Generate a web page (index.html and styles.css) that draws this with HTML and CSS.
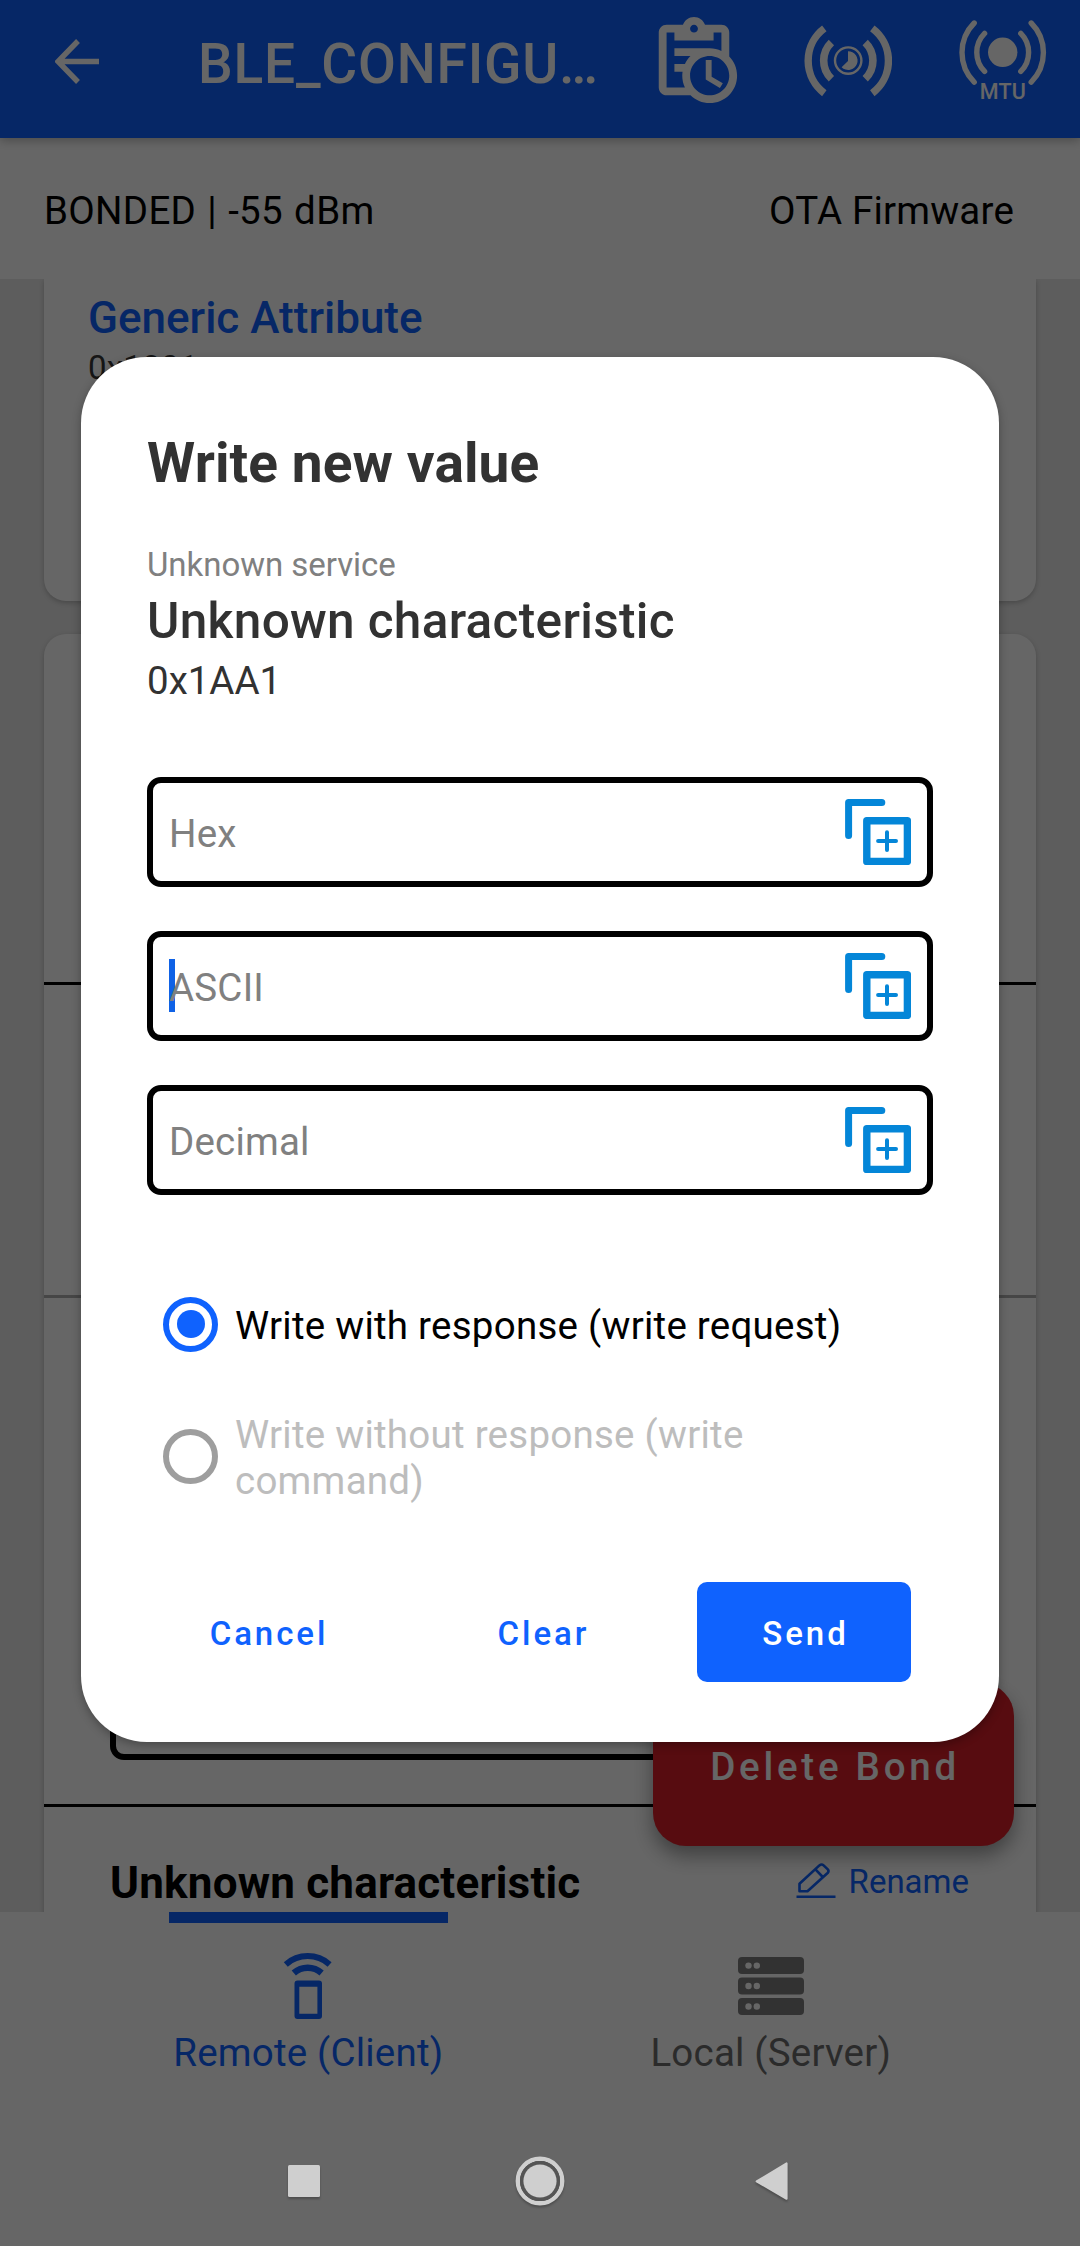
FILE: index.html
```html
<!DOCTYPE html>
<html lang="en">
<head>
<meta charset="utf-8">
<title>BLE_CONFIGURATOR</title>
<link rel="stylesheet" href="styles.css">
</head>
<body>
<svg class="defs" width="0" height="0">
  <symbol id="copy-add" viewBox="0 0 66 66">
    <g fill="none" stroke="#0486d8" stroke-linejoin="round" stroke-linecap="round">
      <path d="M3.6 36.5V3.6H36.8" stroke-width="7"/>
      <rect x="21.8" y="21.8" width="40.6" height="40.6" stroke-width="7.4"/>
      <path d="M42 33.2V51M33.1 42.1H51" stroke-width="4"/>
    </g>
  </symbol>
</svg>
<div class="screen">
  <header class="toolbar">
    <svg class="back" width="45" height="45" viewBox="0 0 45 45"><path d="M44 22.5H4M23 2L3 22.5L23 43" fill="none" stroke="#fff" stroke-width="5.4"/></svg>
    <h1 class="device">BLE_CONFIGU…</h1>
    <div class="actions">
      <svg width="94" height="94" viewBox="0 0 24 24"><path fill="#fff" d="M21 11.11V5C21 3.9 20.11 3 19 3H14.82C14.4 1.84 13.3 1 12 1S9.6 1.84 9.18 3H5C3.9 3 3 3.9 3 5V19C3 20.11 3.9 21 5 21H11.11C12.37 22.24 14.09 23 16 23C19.87 23 23 19.87 23 16C23 14.09 22.24 12.37 21 11.11M12 3C12.55 3 13 3.45 13 4S12.55 5 12 5 11 4.55 11 4 11.45 3 12 3M5 19V5H7V7H17V5H19V9.68C18.09 9.25 17.08 9 16 9H7V11H11.1C10.5 11.57 10.04 12.25 9.68 13H7V15H9.08C9.03 15.33 9 15.66 9 16C9 17.08 9.25 18.09 9.68 19H5M16 21C13.24 21 11 18.76 11 16S13.24 11 16 11 21 13.24 21 16 18.76 21 16 21M16.5 16.25L19.36 17.94L18.61 19.16L15 17V12H16.5V16.25Z"/></svg>
      <svg width="88" height="94" viewBox="804 13 88 94">
        <g fill="none" stroke="#fff">
          <path d="M824.3 28.4A40.6 40.6 0 0 0 824.3 93.2M872.3 28.4A40.6 40.6 0 0 1 872.3 93.2" stroke-width="7.4"/>
          <path d="M831.4 42.4A25.3 25.3 0 0 0 831.4 78.8M865.2 42.4A25.3 25.3 0 0 1 865.2 78.8" stroke-width="7.6"/>
          <circle cx="848.2" cy="60.6" r="13.2" stroke-width="2.4"/>
        </g>
        <path d="M848 51.2A9.4 9.4 0 1 1 841.6 67.3L848 61Z" fill="#fff"/>
      </svg>
      <svg width="90" height="94" viewBox="958 13 90 94">
        <g fill="none" stroke="#fff" stroke-linecap="round" stroke-width="5.4">
          <path d="M974.2 23A42 42 0 0 0 974.2 82.2M1031.2 23A42 42 0 0 1 1031.2 82.2"/>
          <path d="M984.6 33.4A27 27 0 0 0 984.6 71.4M1020.8 33.4A27 27 0 0 1 1020.8 71.4"/>
        </g>
        <circle cx="1002.7" cy="52.3" r="14.7" fill="#fff"/>
        <text x="1003" y="99.4" text-anchor="middle" class="mtu">MTU</text>
      </svg>
    </div>
  </header>

  <div class="status"><span class="bond">BONDED | -55 dBm</span><span>OTA Firmware</span></div>

  <main class="list">
    <section class="card generic">
      <h2 class="service">Generic Attribute</h2>
      <p class="uuid">0x1801</p>
    </section>
    <section class="card unknown">
      <div class="row first"></div>
      <div class="row second"></div>
      <div class="row third"><div class="value"></div></div>
      <div class="row characteristic">
        <h3>Unknown characteristic</h3>
        <a class="rename">
          <svg width="40" height="36" viewBox="0 0 40 36"><g fill="none" stroke="#0f62fe" stroke-width="2.6" stroke-linejoin="round"><path d="M3.5 28.3V20.8L23.4 2.4Q25.6 .6 27.6 2.4L31.8 6.4Q33.3 8.2 31.6 10L11.5 28.3ZM19.4 6.4L26.8 14"/><path d="M.5 33.8H39.5"/></g></svg>
          <span>Rename</span>
        </a>
      </div>
    </section>
    <button class="delete">Delete Bond</button>
  </main>

  <nav class="tabs">
    <div class="tab active">
      <svg width="66" height="66" viewBox="0 0 66 66">
        <g fill="none" stroke="#0f62fe" stroke-linejoin="round">
          <path d="M10.8 11.4A33 33 0 0 1 54.6 11.4" stroke-width="6"/>
          <path d="M18.8 20A21 21 0 0 1 46.6 20" stroke-width="6.4"/>
        </g>
        <path fill="#0f62fe" fill-rule="evenodd" d="M22.5 27.4H44Q47 27.4 47 30.4V63Q47 66 44 66H22.5Q19.5 66 19.5 63V30.4Q19.5 27.4 22.5 27.4ZM24.3 33.7V60.8H42.4V33.7Z"/>
      </svg>
      <span>Remote (Client)</span>
    </div>
    <div class="tab">
      <svg width="66" height="66" viewBox="0 0 66 66">
        <g fill="#7d7d7d"><rect y="4" width="66" height="17" rx="4"/><rect y="24.6" width="66" height="17" rx="4"/><rect y="45" width="66" height="17" rx="4"/></g>
        <g fill="#fff"><circle cx="10.5" cy="12.6" r="3.2"/><circle cx="18.8" cy="12.6" r="3.2"/><circle cx="10.5" cy="33" r="3.2"/><circle cx="18.8" cy="33" r="3.2"/><circle cx="10.5" cy="53.5" r="3.2"/><circle cx="18.8" cy="53.5" r="3.2"/></g>
      </svg>
      <span>Local (Server)</span>
    </div>
  </nav>

  <footer class="system">
    <svg width="34" height="34" viewBox="0 0 34 34"><rect x="1" y="1" width="32" height="32" rx="1.5" fill="#cfcfcf"/></svg>
    <svg class="home" width="50" height="50" viewBox="0 0 50 50"><circle cx="25" cy="25" r="22.2" fill="none" stroke="#cfcfcf" stroke-width="4.4"/><circle cx="25" cy="25" r="18.2" fill="none" stroke="#555" stroke-width="3.6"/><circle cx="25" cy="25" r="16.6" fill="#cfcfcf"/></svg>
    <svg width="34" height="40" viewBox="0 0 34 40"><path d="M31.6 2.4V37.8L1.6 20.4Z" fill="#cfcfcf" stroke="#cfcfcf" stroke-width="2" stroke-linejoin="round"/></svg>
  </footer>

  <div class="scrim">
    <div class="dialog">
      <h2 class="title">Write new value</h2>
      <p class="svc">Unknown service</p>
      <p class="char">Unknown characteristic</p>
      <p class="id">0x1AA1</p>
      <div class="fields">
        <div class="field"><span>Hex</span><svg width="66" height="66"><use href="#copy-add"/></svg></div>
        <div class="field focused"><span>ASCII</span><svg width="66" height="66"><use href="#copy-add"/></svg></div>
        <div class="field"><span>Decimal</span><svg width="66" height="66"><use href="#copy-add"/></svg></div>
      </div>
      <div class="option checked"><i class="radio"></i><span>Write with response (write request)</span></div>
      <div class="option disabled"><i class="radio"></i><span>Write without response (write command)</span></div>
      <div class="buttons">
        <button class="cancel">Cancel</button>
        <button class="clear">Clear</button>
        <button class="send">Send</button>
      </div>
    </div>
  </div>
</div>
</body>
</html>
```
FILE: styles.css
```css
* { box-sizing: border-box; margin: 0; padding: 0; }
body { font-family: Roboto, "Liberation Sans", sans-serif; background: #fff; font-size: 38.5px; line-height: 46px; letter-spacing: .2px; }
svg { display: block; flex: none; }
button { border: 0; background: none; font-family: inherit; font-weight: 500; }
.defs { position: absolute; }
.screen { position: relative; width: 1080px; height: 2246px; display: flex; flex-direction: column; overflow: hidden; background: #fff; }

.toolbar { height: 138px; flex: none; background: #0f62fe; display: flex; align-items: flex-start; padding-left: 55px; position: relative; z-index: 1; box-shadow: 0 3px 9px rgba(0,0,0,.25); }
.back { margin-top: 39px; }
.device { margin: 32px 0 0 98px; width: 449px; font-size: 55px; line-height: 64px; font-weight: 500; letter-spacing: .8px; color: #fff; white-space: nowrap; }
.actions { display: flex; padding-top: 13px; }
.actions svg + svg { margin-left: 63px; }
.actions svg + svg + svg { margin-left: 66px; }
.mtu { font-size: 21.5px; font-weight: 500; fill: #fff; }

.status { height: 141px; flex: none; display: flex; justify-content: space-between; align-items: center; padding: 4px 66px 0 44px; color: #000; }
.bond { letter-spacing: .3px; word-spacing: 1.3px; }

.list { height: 1633px; flex: none; position: relative; overflow: hidden; background: #e8e8e8; padding: 0 44px; display: flex; flex-direction: column; gap: 33px; }
.card { flex: none; background: #fff; border-radius: 22px; box-shadow: 0 2px 5px rgba(0,0,0,.22); overflow: hidden; }
.generic { height: 322px; border-radius: 0 0 22px 22px; padding: 14px 44px; }
.service { font-size: 44px; line-height: 50px; font-weight: 500; letter-spacing: 0; color: #0f62fe; }
.uuid { font-size: 33px; line-height: 40px; margin-top: 5px; color: #383838; }
.row { border-bottom: 3px solid #000; }
.first { height: 351px; }
.second { height: 313px; border-color: #b0b0b0; }
.third { height: 509px; padding: 0 66px 44px; display: flex; align-items: flex-end; }
.value { flex: 1; height: 110px; border: 6px solid #000; border-radius: 14px; }
.characteristic { height: 200px; padding: 50px 67px 0 66px; display: flex; justify-content: space-between; align-items: flex-start; }
.characteristic h3 { font-size: 44px; line-height: 52px; font-weight: 700; color: #000; }
.rename { display: flex; align-items: flex-start; gap: 13px; font-size: 33px; line-height: 40px; letter-spacing: 0; color: #0f62fe; margin-top: 6px; }
.rename span { margin-top: -1px; }
.delete { position: absolute; left: 653px; top: 1404px; width: 361px; height: 163px; border-radius: 33px; background: #da1e28; color: #fff; font-size: 38.5px; letter-spacing: 3.75px; padding: 3px 0 0 3px; box-shadow: 0 10px 20px rgba(0,0,0,.38); }

.tabs { height: 208px; flex: none; display: flex; padding: 0 78px 0 77px; background: #fff; }
.tab { flex: 1; display: flex; flex-direction: column; align-items: center; padding-top: 41px; color: #6c6c6c; }
.tab svg { margin-bottom: 11px; }
.tab.active { color: #0f62fe; padding-top: 0; }
.tab.active::before { content: ""; width: 279px; height: 11px; margin-bottom: 30px; background: #0f62fe; flex: none; }
.system { flex: 1; position: relative; z-index: 3; display: flex; align-items: center; padding: 0 291px 4px 287px; justify-content: space-between; }
.system svg { filter: drop-shadow(0 2px 1px rgba(0,0,0,.25)); }
.home { margin-left: 4px; }

.scrim { position: absolute; inset: 0; z-index: 2; background: rgba(0,0,0,.6); padding: 357px 81px 0; }
.dialog { height: 1385px; background: #fff; border-radius: 66px; padding: 74px 66px 0; box-shadow: 0 3px 10px rgba(0,0,0,.3); color: #323232; }
.title { font-size: 55px; line-height: 64px; font-weight: 700; letter-spacing: .1px; }
.svc { font-size: 33px; line-height: 40px; margin-top: 50px; letter-spacing: -.04px; color: #808080; }
.char { font-size: 49.5px; line-height: 58px; font-weight: 500; letter-spacing: .33px; margin-top: 7px; }
.id { margin-top: 8px; letter-spacing: 0; }
.fields { margin-top: 73px; display: flex; flex-direction: column; gap: 44px; }
.field { position: relative; height: 110px; border: 6px solid #000; border-radius: 14px; display: flex; align-items: center; justify-content: space-between; padding: 0 16px; color: #808080; }
.field span { position: relative; padding-top: 3px; }
.focused::before { content: ""; position: absolute; left: 16px; top: 22px; width: 6px; height: 53px; background: #0f62e6; }
.option { display: flex; align-items: center; gap: 17px; margin: 80px 0 0 16px; height: 98px; color: #000; letter-spacing: .25px; }
.option span { padding-top: 3px; width: 560px; white-space: nowrap; }
.radio { width: 55px; height: 55px; flex: none; border: 6px solid #9e9e9e; border-radius: 50%; display: flex; align-items: center; justify-content: center; }
.checked .radio { border-color: #0f62fe; }
.checked .radio::before { content: ""; width: 28px; height: 28px; border-radius: 50%; background: #0f62fe; }
.disabled { margin-top: 34px; color: #bdbdbd; }
.disabled span { white-space: normal; }
.buttons { display: flex; justify-content: space-between; height: 100px; margin: 77px 22px 0; }
.buttons button { width: 214px; font-size: 33px; letter-spacing: 2.95px; padding-top: 3px; color: #0f62fe; }
.buttons .cancel { margin-left: -7px; }
.buttons .clear { margin-left: 14px; }
.buttons .send { padding-left: 3px; background: #0f62fe; color: #fff; border-radius: 10px; }
```
